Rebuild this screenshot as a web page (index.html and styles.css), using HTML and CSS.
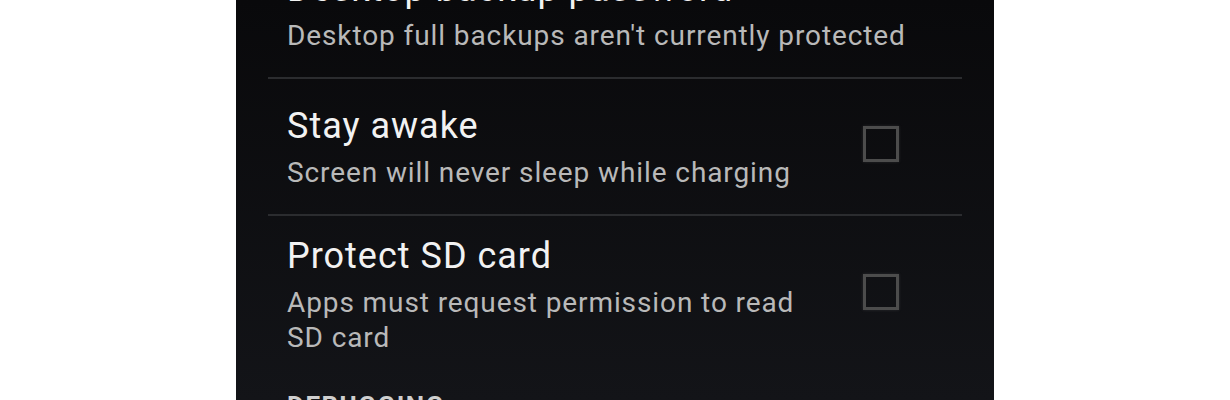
FILE: index.html
```html
<!DOCTYPE html>
<html lang="en">
<head>
  <meta charset="UTF-8">
  <title>Developer options</title>
  <link rel="stylesheet" href="styles.css">
</head>
<body>

<div class="screen">
  <div class="prefs">
    <div class="pref">
      <div class="pref-text">
        <div class="pref-title">Desktop backup password</div>
        <div class="pref-summary">Desktop full backups aren't currently protected</div>
      </div>
    </div>
    <div class="divider"></div>
    <div class="pref">
      <div class="pref-text">
        <div class="pref-title">Stay awake</div>
        <div class="pref-summary">Screen will never sleep while charging</div>
      </div>
      <div class="checkbox"></div>
    </div>
    <div class="divider"></div>
    <div class="pref">
      <div class="pref-text">
        <div class="pref-title">Protect SD card</div>
        <div class="pref-summary">Apps must request permission to read SD card</div>
      </div>
      <div class="checkbox"></div>
    </div>
    <div class="category">DEBUGGING</div>
  </div>
</div>

</body>
</html>
```

FILE: styles.css
```css
body {
  margin: 0;
  background-color: #fff;
  font-family: Roboto, 'Noto Sans', sans-serif;
}

.screen {
  width: 758px;
  height: 400px;
  margin: 0 auto;
  overflow: hidden;
  background: linear-gradient(#09090b, #131418);
}

.prefs {
  margin-top: -58px;
  padding: 0 32px;
}

.pref {
  display: flex;
  align-items: center;
  min-height: 135px;
  box-sizing: border-box;
  padding: 18px 63px 18px 19px;
}

.pref-text {
  flex: 1;
}

.pref:first-child .pref-summary {
  margin-right: -63px;
}

.pref-title {
  font-size: 36px;
  line-height: 44px;
  letter-spacing: 1px;
  color: #f2f2f2;
}

.pref-summary {
  margin-top: 7px;
  font-size: 28px;
  line-height: 35px;
  letter-spacing: 0.9px;
  color: #b9b9b9;
}

.checkbox {
  width: 30px;
  height: 30px;
  margin: 0 0 6px 40px;
  border: 3px solid #4c4c4c;
  box-shadow: 0 0 3px rgba(120, 120, 120, 0.25);
}

.divider {
  height: 2px;
  background-color: #2b2c2f;
}

.category {
  padding: 18px 19px 0;
  font-size: 26px;
  font-weight: bold;
  letter-spacing: 1.5px;
  color: #cfcfcf;
}
```
